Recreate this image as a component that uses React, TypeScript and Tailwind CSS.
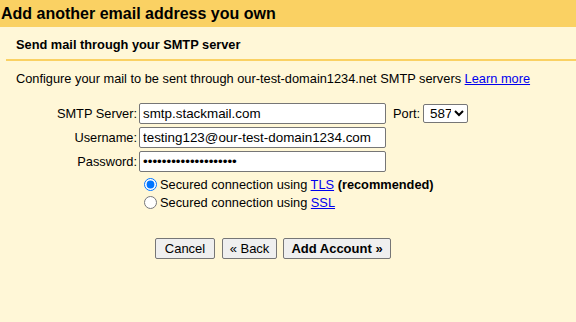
import React from "react";

export default function App() {
  return (
    <div className="w-[576px] h-[322px] bg-[#fff7d7] font-['Liberation_Sans',Arial,sans-serif] text-[12.8px] text-black overflow-hidden">
      <div className="h-[27px] bg-[#fad163] text-[16px] font-bold leading-[27px] pl-[1px]">
        Add another email address you own
      </div>
      <div className="ml-[6px] border-b-2 border-[#fad163] h-[34px] pl-[10px] pt-[10px] leading-[15px] font-bold">
        Send mail through your SMTP server
      </div>
      <div className="pl-[16px] mt-[10px] leading-[15px]">
        Configure your mail to be sent through our-test-domain1234.net SMTP servers{" "}
        <a href="#" className="text-[#0000ee] underline">Learn more</a>
      </div>
      <div className="mt-[17px] flex flex-col gap-[3px]">
        <div className="flex items-center h-[21px]">
          <label className="w-[137px] text-right leading-[15px]">SMTP Server:</label>
          <input
            readOnly
            value="smtp.stackmail.com"
            className="ml-[2px] w-[247px] h-[21px] border border-[#767676] rounded-[2px] bg-white px-[3px] text-[13.4px] outline-none"
          />
          <label className="ml-[7px] leading-[15px]">Port:</label>
          <select
            defaultValue="587"
            className="ml-[3px] w-[45px] h-[19px] border border-[#767676] rounded-[2px] bg-white text-[13.4px] pl-[2px] outline-none"
          >
            <option>587</option>
            <option>465</option>
          </select>
        </div>
        <div className="flex items-center h-[21px]">
          <label className="w-[137px] text-right leading-[15px]">Username:</label>
          <input
            readOnly
            value="testing123@our-test-domain1234.com"
            className="ml-[2px] w-[247px] h-[21px] border border-[#767676] rounded-[2px] bg-white px-[3px] text-[13.4px] outline-none"
          />
        </div>
        <div className="flex items-center h-[21px]">
          <label className="w-[137px] text-right leading-[15px]">Password:</label>
          <input
            readOnly
            type="password"
            value="••••••••••••••••••••"
            className="ml-[2px] w-[247px] h-[21px] border border-[#767676] rounded-[2px] bg-white px-[3px] text-[13.4px] outline-none"
          />
        </div>
      </div>
      <div className="mt-[3px] pl-[144px] flex flex-col">
        <label className="flex items-center h-[18px]">
          <input type="radio" name="sec" defaultChecked className="m-0 w-[13px] h-[13px]" />
          <span className="ml-[3px] leading-[15px]">
            Secured connection using <a href="#" className="text-[#0000ee] underline">TLS</a>{" "}
            <b>(recommended)</b>
          </span>
        </label>
        <label className="flex items-center h-[18px]">
          <input type="radio" name="sec" className="m-0 w-[13px] h-[13px]" />
          <span className="ml-[3px] leading-[15px]">
            Secured connection using <a href="#" className="text-[#0000ee] underline">SSL</a>
          </span>
        </label>
      </div>
      <div className="mt-[27px] pl-[155px] flex items-center">
        <button className="h-[21px] w-[60px] border border-[#767676] rounded-[2px] bg-[#efefef] text-[13px] leading-[15px]">
          Cancel
        </button>
        <button className="ml-[7px] h-[21px] w-[55px] border border-[#767676] rounded-[2px] bg-[#efefef] text-[13px] leading-[15px]">
          « Back
        </button>
        <button className="ml-[6px] h-[21px] w-[108px] border border-[#767676] rounded-[2px] bg-[#efefef] text-[13px] leading-[15px] font-bold">
          Add Account »
        </button>
      </div>
    </div>
  );
}
